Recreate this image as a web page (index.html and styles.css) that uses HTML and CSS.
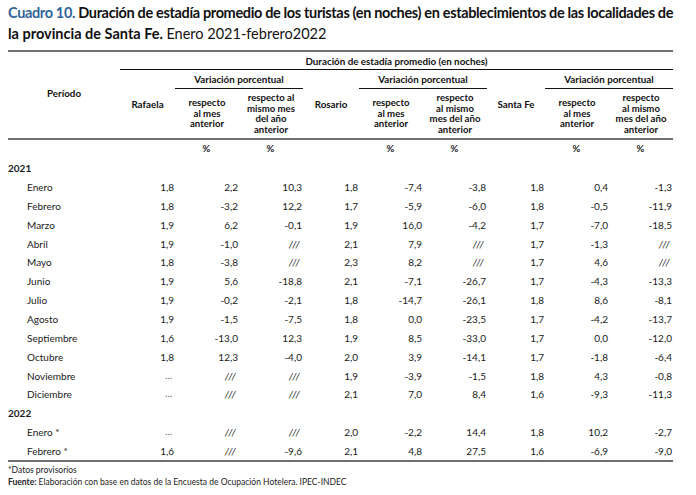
FILE: index.html
```html
<!DOCTYPE html>
<html lang="es">
<head>
<meta charset="utf-8">
<title>Cuadro 10</title>
<link rel="stylesheet" href="styles.css">
</head>
<body>
<div class="page">
  <h1 class="title"><span class="line1"><span class="num">Cuadro 10.</span> Duración de estadía promedio de los turistas (en noches) en establecimientos de las localidades de</span><br>la provincia de Santa Fe. <span class="plain">Enero 2021-febrero2022</span></h1>
  <table class="tbl">
    <colgroup>
      <col class="c-per"><col class="c-raf"><col class="c-v"><col class="c-v"><col class="c-ros"><col class="c-v"><col class="c-v"><col class="c-sf"><col class="c-v"><col class="c-v">
    </colgroup>
    <thead>
      <tr class="h1">
        <th rowspan="3" class="per thick">Período</th>
        <th colspan="9" class="top ul">Duración de estadía promedio (en noches)</th>
      </tr>
      <tr class="h2">
        <th rowspan="2" class="loc thick">Rafaela</th>
        <th colspan="2" class="ul">Variación porcentual</th>
        <th rowspan="2" class="loc thick">Rosario</th>
        <th colspan="2" class="ul">Variación porcentual</th>
        <th rowspan="2" class="loc thick">Santa Fe</th>
        <th colspan="2" class="ul">Variación porcentual</th>
      </tr>
      <tr class="h3">
        <th class="sub thick">respecto<br>al mes<br>anterior</th>
        <th class="sub thick">respecto al<br>mismo mes<br>del año<br>anterior</th>
        <th class="sub thick">respecto<br>al mes<br>anterior</th>
        <th class="sub thick">respecto<br>al mismo<br>mes del año<br>anterior</th>
        <th class="sub thick">respecto<br>al mes<br>anterior</th>
        <th class="sub thick">respecto<br>al mismo<br>mes del año<br>anterior</th>
      </tr>
    </thead>
    <tbody>
      <tr class="pct"><td></td><td></td><td>%</td><td>%</td><td></td><td>%</td><td>%</td><td></td><td>%</td><td>%</td></tr>
      <tr class="year"><td colspan="10">2021</td></tr>
      <tr><td class="m">Enero</td><td>1,8</td><td>2,2</td><td>10,3</td><td>1,8</td><td>-7,4</td><td>-3,8</td><td>1,8</td><td>0,4</td><td>-1,3</td></tr>
      <tr><td class="m">Febrero</td><td>1,8</td><td>-3,2</td><td>12,2</td><td>1,7</td><td>-5,9</td><td>-6,0</td><td>1,8</td><td>-0,5</td><td>-11,9</td></tr>
      <tr><td class="m">Marzo</td><td>1,9</td><td>6,2</td><td>-0,1</td><td>1,9</td><td>16,0</td><td>-4,2</td><td>1,7</td><td>-7,0</td><td>-18,5</td></tr>
      <tr><td class="m">Abril</td><td>1,9</td><td>-1,0</td><td class="na">///</td><td>2,1</td><td>7,9</td><td class="na">///</td><td>1,7</td><td>-1,3</td><td class="na">///</td></tr>
      <tr><td class="m">Mayo</td><td>1,8</td><td>-3,8</td><td class="na">///</td><td>2,3</td><td>8,2</td><td class="na">///</td><td>1,7</td><td>4,6</td><td class="na">///</td></tr>
      <tr><td class="m">Junio</td><td>1,9</td><td>5,6</td><td>-18,8</td><td>2,1</td><td>-7,1</td><td>-26,7</td><td>1,7</td><td>-4,3</td><td>-13,3</td></tr>
      <tr><td class="m">Julio</td><td>1,9</td><td>-0,2</td><td>-2,1</td><td>1,8</td><td>-14,7</td><td>-26,1</td><td>1,8</td><td>8,6</td><td>-8,1</td></tr>
      <tr><td class="m">Agosto</td><td>1,9</td><td>-1,5</td><td>-7,5</td><td>1,8</td><td>0,0</td><td>-23,5</td><td>1,7</td><td>-4,2</td><td>-13,7</td></tr>
      <tr><td class="m">Septiembre</td><td>1,6</td><td>-13,0</td><td>12,3</td><td>1,9</td><td>8,5</td><td>-33,0</td><td>1,7</td><td>0,0</td><td>-12,0</td></tr>
      <tr><td class="m">Octubre</td><td>1,8</td><td>12,3</td><td>-4,0</td><td>2,0</td><td>3,9</td><td>-14,1</td><td>1,7</td><td>-1,8</td><td>-6,4</td></tr>
      <tr><td class="m">Noviembre</td><td class="el">…</td><td class="na">///</td><td class="na">///</td><td>1,9</td><td>-3,9</td><td>-1,5</td><td>1,8</td><td>4,3</td><td>-0,8</td></tr>
      <tr><td class="m">Diciembre</td><td class="el">…</td><td class="na">///</td><td class="na">///</td><td>2,1</td><td>7,0</td><td>8,4</td><td>1,6</td><td>-9,3</td><td>-11,3</td></tr>
      <tr class="year"><td colspan="10">2022</td></tr>
      <tr><td class="m">Enero *</td><td class="el">…</td><td class="na">///</td><td class="na">///</td><td>2,0</td><td>-2,2</td><td>14,4</td><td>1,8</td><td>10,2</td><td>-2,7</td></tr>
      <tr><td class="m">Febrero *</td><td>1,6</td><td class="na">///</td><td>-9,6</td><td>2,1</td><td>4,8</td><td>27,5</td><td>1,6</td><td>-6,9</td><td>-9,0</td></tr>
    </tbody>
  </table>
  <div class="notes">
    <p>*Datos provisorios</p>
    <p><b>Fuente:</b> Elaboración con base en datos de la Encuesta de Ocupación Hotelera. IPEC-INDEC</p>
  </div>
</div>
</body>
</html>
```
FILE: styles.css
```css
html, body {
  margin: 0;
  padding: 0;
  background: #fff;
}
body {
  font-family: Lato, "Open Sans", sans-serif;
  color: #1a1a1a;
}
.page {
  padding: 2px 8px 0 8px;
}
.title {
  margin: 0 0 6px 0;
  font-size: 14.5px;
  line-height: 21px;
  font-weight: 700;
  color: #111;
  white-space: nowrap;
}
.title .line1 {
  letter-spacing: -0.35px;
}
.title .num {
  color: #2f6496;
}
.title .plain {
  font-weight: 400;
}
.tbl {
  width: 665px;
  table-layout: fixed;
  border-collapse: separate;
  border-spacing: 0;
  border-top: 2px solid #707070;
  border-bottom: 2px solid #707070;
}
.c-per { width: 112px; }
.c-raf { width: 55px; }
.c-ros { width: 56px; }
.c-sf { width: 58px; }
.c-v { width: 64px; }
th {
  padding: 0;
  font-size: 9.8px;
  line-height: 12px;
  font-weight: 700;
  color: #111;
  text-align: center;
  vertical-align: middle;
}
.h1 { height: 18px; }
.h2 { height: 19px; }
.h3 { height: 51px; }
.ul { border-bottom: 1px solid #111; }
.thick { border-bottom: 2px solid #707070; }
.per { padding-bottom: 4px; }
.sub {
  padding-top: 1px;
  font-size: 9.6px;
  line-height: 10.5px;
}
td {
  padding: 0 1px 0 0;
  font-size: 10px;
  line-height: 12px;
  text-align: right;
  vertical-align: middle;
  white-space: nowrap;
}
tbody tr { height: 18.85px; }
.pct td {
  text-align: center;
  font-weight: 700;
  font-size: 9.5px;
}
.year td {
  text-align: left;
  font-weight: 700;
}
td.m {
  text-align: left;
  padding-left: 19px;
}
td.na {
  font-style: italic;
  letter-spacing: 1.2px;
  padding-right: 2px;
}
td.el {
  color: #555;
  font-size: 9px;
  padding-right: 3px;
}
.notes {
  padding-top: 3px;
}
.notes p {
  margin: 0;
  font-size: 8.5px;
  line-height: 11.5px;
  color: #222;
}
```
